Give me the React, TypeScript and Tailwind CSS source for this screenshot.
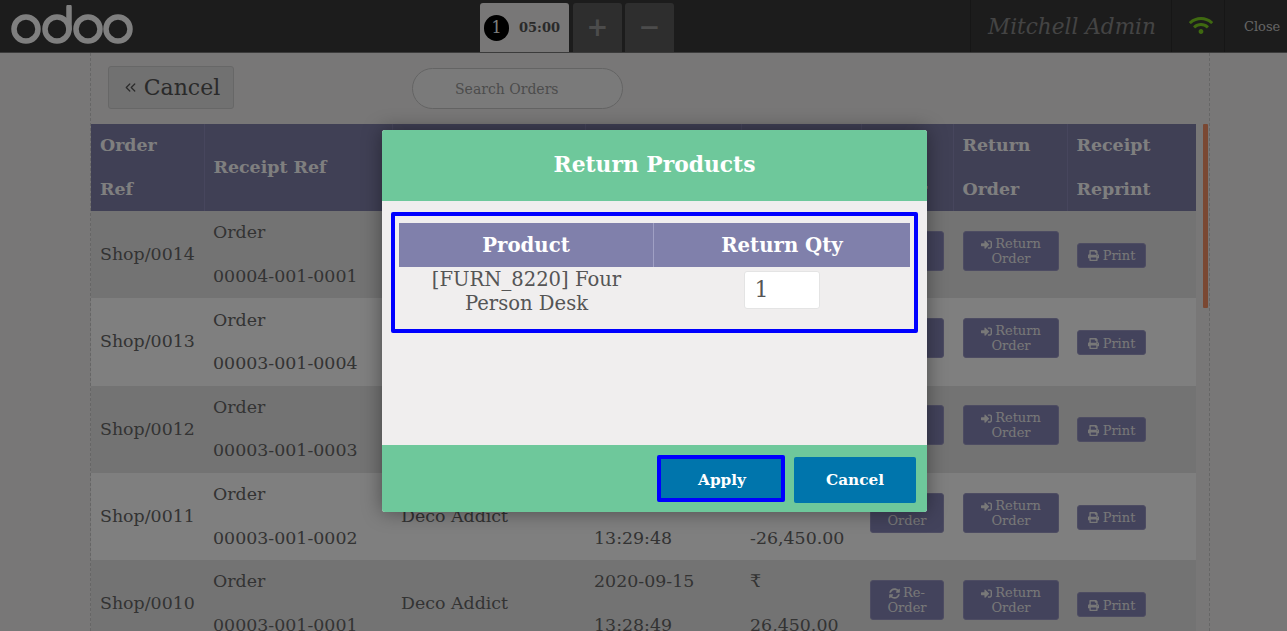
import { ChevronsLeft } from 'lucide-react';
import { FaPrint, FaSignInAlt, FaSyncAlt, FaWifi } from 'react-icons/fa';

const serif = { fontFamily: '"DejaVu Serif", serif' };

type Row = {
    ref: string;
    receipt: string;
    customer: string;
    date: string;
    time: string;
    total: string;
};

const rows: Row[] = [
    { ref: 'Shop/0014', receipt: '00004-001-0001', customer: 'Deco Addict', date: '2020-09-15', time: '13:35:10', total: '-26,450.00' },
    { ref: 'Shop/0013', receipt: '00003-001-0004', customer: 'Deco Addict', date: '2020-09-15', time: '13:32:02', total: '26,450.00' },
    { ref: 'Shop/0012', receipt: '00003-001-0003', customer: 'Deco Addict', date: '2020-09-15', time: '13:30:41', total: '-26,450.00' },
    { ref: 'Shop/0011', receipt: '00003-001-0002', customer: 'Deco Addict', date: '2020-09-15', time: '13:29:48', total: '-26,450.00' },
    { ref: 'Shop/0010', receipt: '00003-001-0001', customer: 'Deco Addict', date: '2020-09-15', time: '13:28:49', total: '26,450.00' },
];

const OdooLogo = () => (
    <svg width="122" height="39" viewBox="0 0 122 39" fill="none" stroke="#ffffff" strokeWidth="5.5">
        <circle cx="15" cy="24" r="12" />
        <circle cx="46" cy="24" r="12" />
        <path d="M58 2v22" strokeLinecap="round" />
        <circle cx="77" cy="24" r="12" />
        <circle cx="107" cy="24" r="12" />
    </svg>
);

const ActionButton = ({ children, className }: { children: React.ReactNode; className: string }) => (
    <div className={`rounded-[3px] border border-[#9a99c4] bg-[#8786b8] text-center text-[13px] leading-[15px] text-[#f0f0f0] ${className}`}>
        {children}
    </div>
);

const App = () => {
    return (
        <div className="relative h-[631px] w-[1287px] overflow-hidden bg-[#f0eeee] text-[#666666]" style={serif}>
            {/* barra superior */}
            <header className="flex h-[53px] items-stretch border-b border-[#777777] bg-[#393939]">
                <div className="ml-[11px] w-[469px] pt-[5px]">
                    <OdooLogo />
                </div>
                <div className="flex items-end">
                    <div className="flex h-[49px] w-[89px] items-center gap-[10px] rounded-t-[3px] bg-[#f0eeee] pl-[4px]">
                        <span className="flex h-[26px] w-[25px] items-center justify-center rounded-full bg-black text-[16px] text-white">1</span>
                        <span className="text-[13px] font-bold text-[#555555]">05:00</span>
                    </div>
                    <div className="ml-[4px] flex h-[49px] w-[49px] items-center justify-center rounded-t-[3px] bg-[#5c5c5c] text-[26px] font-bold text-[#999999]">+</div>
                    <div className="ml-[3px] flex h-[49px] w-[49px] items-center justify-center rounded-t-[3px] bg-[#5c5c5c] text-[26px] font-bold text-[#999999]">−</div>
                </div>
                <div className="ml-auto flex items-stretch">
                    <div className="flex w-[201px] items-center justify-center border-l border-[#2c2c2c] pt-[2px] pl-[2px] text-[21.6px] text-[#888888] italic">Mitchell Admin</div>
                    <div className="flex w-[53px] items-center justify-center border-l border-[#2c2c2c] pb-[2px] pl-[5px]">
                        <FaWifi className="h-[21px] w-[24px] text-[#7ed321]" />
                    </div>
                    <div className="flex w-[63px] items-center justify-start border-l border-[#2c2c2c] pt-[2px] pl-[19px] text-[13px] text-[#cccccc]">Close</div>
                </div>
            </header>

            {/* lista de pedidos */}
            <main className="ml-[90px] h-[578px] w-[1120px] border-x border-dashed border-[#cccccc]">
                <div className="flex h-[71px] items-start pt-[13px] pl-[17px]">
                    <div className="flex h-[43px] w-[126px] items-center justify-center gap-[5px] rounded-[3px] border border-[#cfcfcf] bg-[#e2e2e2] text-[22px] text-[#555555]">
                        <ChevronsLeft className="h-[17px] w-[17px]" strokeWidth={1.75} />
                        Cancel
                    </div>
                    <div className="mt-[2px] ml-[178px] flex h-[41px] w-[211px] items-center rounded-full border border-[#c8c8c8] bg-[#f5f5f5] pt-[2px] pl-[42px] text-[14px] text-[#999999]">
                        Search Orders
                    </div>
                </div>
                <div className="flex items-start">
                    <table className="w-[1105px] table-fixed border-collapse text-[17.4px] leading-[43.6px]">
                        <colgroup>
                            <col className="w-[113px]" />
                            <col className="w-[188px]" />
                            <col className="w-[193px]" />
                            <col className="w-[156px]" />
                            <col className="w-[120px]" />
                            <col className="w-[92px]" />
                            <col className="w-[114px]" />
                            <col className="w-[129px]" />
                        </colgroup>
                        <thead>
                            <tr className="h-[85.5px] bg-[#8080ab] text-left text-[17.4px] font-bold text-white">
                                <th className="border-r border-[#8e8cbb] px-[9px]">Order Ref</th>
                                <th className="border-r border-[#8e8cbb] px-[9px]">Receipt Ref</th>
                                <th className="border-r border-[#8e8cbb] px-[9px]">Customer</th>
                                <th className="border-r border-[#8e8cbb] px-[9px]">Order Date</th>
                                <th className="border-r border-[#8e8cbb] px-[9px]">Total</th>
                                <th className="border-r border-[#8e8cbb] px-[9px]">Re-Order</th>
                                <th className="border-r border-[#8e8cbb] px-[9px]">Return Order</th>
                                <th className="px-[9px]">Receipt Reprint</th>
                            </tr>
                        </thead>
                        <tbody>
                            {rows.map((row, i) => (
                                <tr key={row.ref} className={i % 2 === 0 ? 'h-[87.3px] bg-[#e6e6e6]' : 'h-[87.3px] bg-[#fefefe]'}>
                                    <td className="px-[9px]">{row.ref}</td>
                                    <td className="px-[9px]">
                                        <div>Order</div>
                                        <div>{row.receipt}</div>
                                    </td>
                                    <td className="px-[9px]">{row.customer}</td>
                                    <td className="px-[9px]">
                                        <div>{row.date}</div>
                                        <div>{row.time}</div>
                                    </td>
                                    <td className="px-[9px]">
                                        <div>₹</div>
                                        <div>{row.total}</div>
                                    </td>
                                    <td className="pl-[9px]">
                                        <ActionButton className="mb-[8px] h-[40px] w-[74px] pt-[4px]">
                                            <FaSyncAlt className="mr-[3px] inline h-[11px] w-[11px]" />
                                            Re-
                                            <br />
                                            Order
                                        </ActionButton>
                                    </td>
                                    <td className="pl-[10px]">
                                        <ActionButton className="mb-[8px] h-[40px] w-[96px] pt-[4px]">
                                            <FaSignInAlt className="mr-[3px] inline h-[11px] w-[11px]" />
                                            Return
                                            <br />
                                            Order
                                        </ActionButton>
                                    </td>
                                    <td className="pl-[10px]">
                                        <ActionButton className="mt-[1px] flex h-[25px] w-[69px] items-center justify-center pt-[1px]">
                                            <FaPrint className="mr-[4px] h-[11px] w-[11px]" />
                                            Print
                                        </ActionButton>
                                    </td>
                                </tr>
                            ))}
                        </tbody>
                    </table>
                    <div className="ml-[7px] h-[184px] w-[5px] rounded-[1px] bg-[#f59067]" />
                </div>
            </main>

            {/* fundo escurecido do popup */}
            <div className="absolute inset-0 bg-black/50" />

            {/* popup */}
            <div className="absolute top-[130px] left-[382px] flex h-[382px] w-[545px] flex-col overflow-hidden rounded-[3px] bg-[#f0eeee] shadow-[0_0_20px_rgba(0,0,0,0.4)]">
                <div className="flex h-[71px] items-center justify-center bg-[#6ec89b] text-[21.8px] font-bold text-white">Return Products</div>
                <div className="flex-1 pt-[11px] pl-[9px]">
                    <div className="h-[121px] w-[527px] rounded-[2px] border-[4px] border-[#0000ff] px-[4px] pt-[7px]">
                        <div className="flex h-[44px] bg-[#8080ab] text-[19.7px] font-bold text-white">
                            <div className="flex w-[255px] items-center justify-center border-r border-[#a0a0c4] pt-[2px]">Product</div>
                            <div className="flex flex-1 items-center justify-center pt-[2px]">Return Qty</div>
                        </div>
                        <div className="flex text-[19.6px] leading-[24px] text-[#555555]">
                            <div className="w-[255px] pt-[1px] text-center">
                                [FURN_8220] Four
                                <br />
                                Person Desk
                            </div>
                            <div className="flex flex-1 justify-center pt-[4px]">
                                <div className="mr-[1px] flex h-[38px] w-[76px] items-center rounded-[3px] border border-[#e4e4e4] bg-white pl-[10px] text-[22px]">1</div>
                            </div>
                        </div>
                    </div>
                </div>
                <div className="flex h-[67px] items-start justify-end gap-[9px] bg-[#6ec89b] pr-[11px] text-[15.3px] font-bold text-white">
                    <div className="mt-[10px] flex h-[47px] w-[128px] items-center justify-center rounded-[2px] border-[4px] border-[#0000ff] bg-[#0075ac] pt-[3px] pl-[2px]">Apply</div>
                    <div className="mt-[12px] flex h-[46px] w-[122px] items-center justify-center rounded-[2px] bg-[#0075ac]">Cancel</div>
                </div>
            </div>
        </div>
    );
};

export default App;
